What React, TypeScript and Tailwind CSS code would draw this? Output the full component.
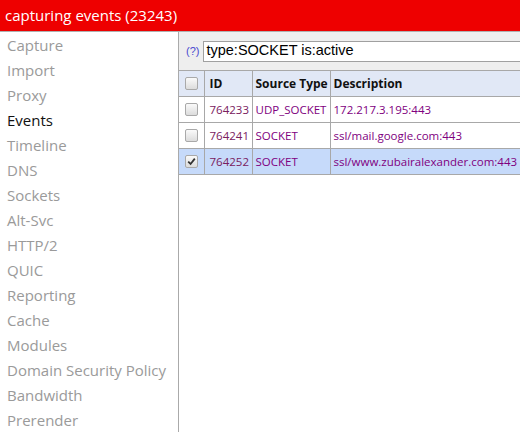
import type { FC } from 'react'

const tabs = [
  'Capture',
  'Import',
  'Proxy',
  'Events',
  'Timeline',
  'DNS',
  'Sockets',
  'Alt-Svc',
  'HTTP/2',
  'QUIC',
  'Reporting',
  'Cache',
  'Modules',
  'Domain Security Policy',
  'Bandwidth',
  'Prerender',
]

const rows = [
  { id: '764233', type: 'UDP_SOCKET', desc: '172.217.3.195:443', checked: false },
  { id: '764241', type: 'SOCKET', desc: 'ssl/mail.google.com:443', checked: false },
  { id: '764252', type: 'SOCKET', desc: 'ssl/www.zubairalexander.com:443', checked: true },
]

const Box: FC<{ checked?: boolean }> = ({ checked }) => (
  <span className="mx-auto flex h-[13px] w-[13px] items-center justify-center rounded-[2px] border border-[#a9a9a9] bg-gradient-to-b from-[#fafafa] to-[#dcdcdc]">
    {checked && (
      <svg width="9" height="9" viewBox="0 0 9 9">
        <path d="M1.2 4.6 L3.6 7 L7.8 1.6" fill="none" stroke="#333" strokeWidth="1.8" />
      </svg>
    )}
  </span>
)

export default function App() {
  const ui = { fontFamily: '"Open Sans", "Noto Sans", sans-serif' }
  return (
    <div className="h-[432px] w-[520px] overflow-hidden bg-white" style={ui}>
      <div className="flex h-[31px] items-center bg-[#ee0000] pl-[5px] text-[15px] text-white">
        capturing events (23243)
      </div>
      <div className="flex h-[401px] border-t border-[#b0b0b0]">
        <div className="w-[179px] shrink-0 border-r border-[#aaaaaa] pl-[7px] pt-[1px]">
          {tabs.map((t) => (
            <div
              key={t}
              className={`h-[25px] text-[15px] leading-[25px] ${t === 'Events' ? 'text-[#111]' : 'text-[#9a9a9a]'}`}
            >
              {t}
            </div>
          ))}
        </div>
        <div className="min-w-0 flex-1">
          <div className="flex h-[38px] items-center bg-[#eeeeee] pl-[7px]">
            <span className="mr-[4px] text-[11px] text-[#4a4ad0]" style={{ fontFamily: '"Liberation Sans", sans-serif' }}>
              (?)
            </span>
            <div
              className="flex h-[21px] flex-1 items-center border border-r-0 border-[#a0a0a0] bg-white pl-[2px] text-[14.5px] text-black"
              style={{ fontFamily: '"Liberation Sans", Arial, sans-serif' }}
            >
              type:SOCKET is:active
            </div>
          </div>
          <table className="w-[360px] border-collapse text-[11.5px]">
            <thead>
              <tr className="h-[26px] bg-[#e1e8f6] text-left text-[12px] font-bold text-[#111]">
                <th className="w-[25px] border border-l-0 border-[#a8a8a8]">
                  <Box />
                </th>
                <th className="w-[48px] border border-[#a8a8a8] pl-[5px] font-bold">ID</th>
                <th className="w-[78px] border border-[#a8a8a8] pl-[3px] font-bold">Source Type</th>
                <th className="border border-r-0 border-[#a8a8a8] pl-[3px] font-bold">Description</th>
              </tr>
            </thead>
            <tbody>
              {rows.map((r) => (
                <tr key={r.id} className={`h-[26px] ${r.checked ? 'bg-[#c6dafa]' : 'bg-white'}`}>
                  <td className="border border-l-0 border-[#a8a8a8]">
                    <Box checked={r.checked} />
                  </td>
                  <td className="border border-[#a8a8a8] pl-[5px] text-[#7a2060]">{r.id}</td>
                  <td className="border border-[#a8a8a8] pl-[3px] whitespace-nowrap text-[#800080]">{r.type}</td>
                  <td className="border border-r-0 border-[#a8a8a8] pl-[3px] whitespace-nowrap text-[#800080]">{r.desc}</td>
                </tr>
              ))}
            </tbody>
          </table>
        </div>
      </div>
    </div>
  )
}
